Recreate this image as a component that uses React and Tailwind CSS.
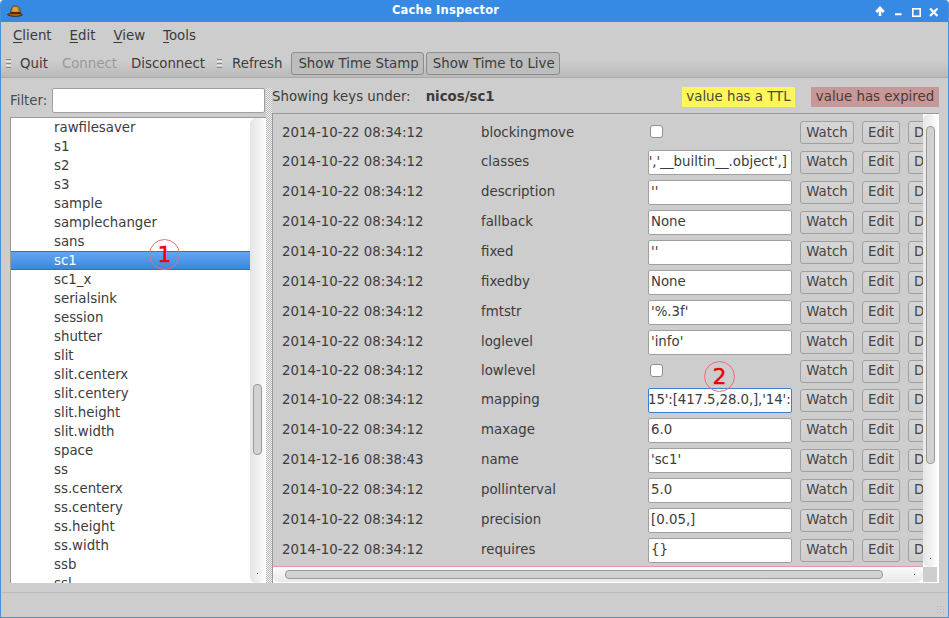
const names = ["rawfilesaver","s1","s2","s3","sample","samplechanger","sans","sc1","sc1_x","serialsink","session","shutter","slit","slit.centerx","slit.centery","slit.height","slit.width","space","ss","ss.centerx","ss.centery","ss.height","ss.width","ssb","ssl"];
const rows = [
  ["2014-10-22 08:34:12","blockingmove",null,29],
  ["2014-10-22 08:34:12","classes","','__builtin__.object',]",30,"end"],
  ["2014-10-22 08:34:12","description","''",30],
  ["2014-10-22 08:34:12","fallback","None",30],
  ["2014-10-22 08:34:12","fixed","''",30],
  ["2014-10-22 08:34:12","fixedby","None",30],
  ["2014-10-22 08:34:12","fmtstr","'%.3f'",30],
  ["2014-10-22 08:34:12","loglevel","'info'",30],
  ["2014-10-22 08:34:12","lowlevel",null,28],
  ["2014-10-22 08:34:12","mapping","15':[417.5,28.0,],'14':",30,"focus"],
  ["2014-10-22 08:34:12","maxage","6.0",30],
  ["2014-12-16 08:38:43","name","'sc1'",30],
  ["2014-10-22 08:34:12","pollinterval","5.0",30],
  ["2014-10-22 08:34:12","precision","[0.05,]",30],
  ["2014-10-22 08:34:12","requires","{}",30],
];
const Btn = ({children, w, cut}) => (
  <div className={`${w} h-[23px] shrink-0 flex items-center rounded-[3px] border border-[#a0a0a0] bg-[linear-gradient(#d6d6d6,#cdcdcd)] text-[#444] overflow-hidden ${cut ? "justify-start pl-[5px]" : "justify-center"}`}>{children}</div>
);
const Grip = () => (
  <div className="w-[5px] flex flex-col gap-[1px] shrink-0">
    <div className="h-[1px] bg-[#8a8a8a]" /><div className="h-[1px] bg-[#f0f0f0]" />
    <div className="h-[1px] bg-[#8a8a8a]" /><div className="h-[1px] bg-[#f0f0f0]" />
    <div className="h-[1px] bg-[#8a8a8a]" />
  </div>
);
const Mark = ({n, cls}) => (
  <div className={`absolute w-[31px] h-[31px] rounded-full border border-[#ee6a7a] flex items-center justify-center text-[#f00000] text-[22px] leading-none [-webkit-text-stroke:0.4px_#f00000] ${cls}`}>{n}</div>
);
const U = ({children}) => <span className="underline underline-offset-2">{children}</span>;
const Dot = ({cls}) => <div className={`absolute w-[1px] h-[1px] bg-[#555] ${cls}`} />;
export default function App() {
  return (
    <div className="relative w-[949px] h-[618px] overflow-hidden flex flex-col bg-[#cdcdcd] text-[13.33px] text-[#3c3c3c] border-x border-b border-[#4a90d9] rounded-t-[4px]" style={{fontFamily:'"DejaVu Sans", sans-serif'}}>
      <div className="h-[22px] shrink-0 relative flex items-center justify-center pr-[58px] bg-[#368ae4] text-white font-bold text-[11.5px] tracking-[0.2px]">
        <svg className="absolute left-[6px] top-[5px]" width="16" height="13" viewBox="0 0 16 13">
          <path d="M3.5 8.5 C4 2.5 5 1 8.5 1 C12 1 13 2.5 13.5 8.5 Z" fill="#c47a1e" stroke="#4a2c0a" strokeWidth="0.7" />
          <path d="M6 2.5 C7 1.8 9.5 1.8 10.5 2.5 L11 6.5 H5.5 Z" fill="#e2a33c" />
          <path d="M0.5 9.5 C3 8 14 8 15.5 9.5 C15 12 1.5 12 0.5 9.5 Z" fill="#a8640f" stroke="#2e1c06" strokeWidth="0.8" />
          <path d="M3.6 7 h9.8 v1.6 h-9.8 Z" fill="#4a2c0a" />
        </svg>
        Cache Inspector
        <svg className="absolute right-[7px] top-[5px]" width="66" height="13" viewBox="0 0 66 13" fill="none" stroke="#fff">
          <path d="M5 11 V4 M1.2 7 L5 3 L8.8 7" strokeWidth="2.6" />
          <path d="M20 9.2 H26.5" strokeWidth="2" />
          <rect x="37.8" y="3.8" width="7.4" height="7.4" strokeWidth="1.6" />
          <path d="M55 3.5 L62.5 11 M62.5 3.5 L55 11" strokeWidth="2.2" />
        </svg>
      </div>
      <div className="h-[28px] shrink-0 flex items-center pl-[12px] gap-[18px] text-[#3a3a3a]">
        <span><U>C</U>lient</span><span><U>E</U>dit</span><span><U>V</U>iew</span><span><U>T</U>ools</span>
      </div>
      <div className="h-[28px] shrink-0 flex items-center pl-[5px] gap-[12px] border-b border-[#a8a8a8] bg-[linear-gradient(#cdcdcd_40%,#b9b9b9)]">
        <Grip />
        <div className="flex items-center gap-[14px] -ml-[3px]">
          <span>Quit</span><span className="text-[#999]">Connect</span><span>Disconnect</span>
        </div>
        <Grip />
        <div className="flex items-center gap-[2px] -ml-[2px]">
          <span className="mr-[7px]">Refresh</span>
          <div className="h-[23px] pl-[6px] pr-[4px] flex items-center rounded-[3px] border border-[#8c8c8c] bg-[#bdbdbd]">Show Time Stamp</div>
          <div className="h-[23px] pl-[6px] pr-[4px] flex items-center rounded-[3px] border border-[#8c8c8c] bg-[#bdbdbd]">Show Time to Live</div>
        </div>
      </div>
      <div className="flex-1 min-h-0 flex pl-[9px] pr-[9px]">
        <div className="w-[256px] shrink-0 flex flex-col">
          <div className="h-[39px] shrink-0 flex items-center pt-[6px] pr-[1px]">
            <span className="text-[#4a4a4a]">Filter:</span>
            <div className="ml-auto w-[213px] h-[25px] bg-white rounded-[2px] border border-[#a0a0a0]" />
          </div>
          <div className="h-[466px] flex overflow-hidden bg-white border-l border-t border-[#999]">
            <div className="flex-1 min-w-0">
              {names.map((n) => (
                <div key={n} className={`h-[19px] pl-[43px] flex items-center ${n === "sc1" ? "bg-[linear-gradient(#62a6f2,#3b87dd)] border-y border-[#2f74c4] text-white" : "text-[#3c3c3c]"}`}>{n}</div>
              ))}
            </div>
            <div className="w-[15px] shrink-0 relative rounded-[6px] bg-[linear-gradient(90deg,#e4e4e4,#fbfbfb)]">
              <div className="absolute left-[3px] top-[266px] w-[9px] h-[71px] rounded-[4px] border border-[#9a9a9a] bg-[#d2d2d2]" />
              <Dot cls="left-[7px] bottom-[9px]" />
            </div>
            <div className="w-[1px] shrink-0 bg-white" />
          </div>
        </div>
        <div className="w-[6px] shrink-0 mt-[10px] bg-[repeating-conic-gradient(#f4f4f4_0_25%,#b8b8b8_0_50%)] bg-[length:2px_2px]" />
        <div className="flex-1 min-w-0 flex flex-col">
          <div className="h-[35px] shrink-0 flex items-center pt-[2px] text-[#3c3c3c]">
            <span>Showing keys under:</span>
            <span className="ml-[15px] font-bold text-[#3c3c3c]">nicos/sc1</span>
            <span className="ml-auto w-[113px] h-[20px] flex items-center justify-center bg-[#fff75a] text-[#4a4a3a]">value has a TTL</span>
            <span className="ml-[16px] w-[128px] h-[20px] flex items-center justify-center bg-[#c89797] text-[#4a3a3a]">value has expired</span>
          </div>
          <div className="h-[470px] flex flex-col overflow-hidden border-l border-t border-[#999] bg-white">
            <div className="flex-1 min-h-0 flex">
              <div className="flex-1 min-w-0 overflow-hidden bg-[#cdcdcd] pt-[4px] border-b border-[#e89a9a]">
                {rows.map(([ts, key, val, h, kind]) => (
                  <div key={key} style={{height: h}} className="flex items-center text-[#3c3c3c]">
                    <span className="w-[208px] pl-[9px] shrink-0">{ts}</span>
                    <span className="w-[167px] shrink-0">{key}</span>
                    <div className="w-[152px] shrink-0">
                      {val === null ? (
                        <div className="w-[13px] h-[13px] ml-[2px] -mt-[2px] bg-white border border-[#8f8f8f] rounded-[3px]" />
                      ) : (
                        <div className={`w-[144px] h-[25px] bg-white rounded-[2px] border flex items-center overflow-hidden whitespace-nowrap ${kind === "focus" ? "border-[#3b7fcf]" : "border-[#a0a0a0]"} ${kind === "end" ? "justify-end pr-[4px]" : "px-[2px]"} ${kind === "focus" ? "pl-0" : ""}`}>
                          <span className={kind === "focus" ? "-ml-[1px] tracking-[-0.1px]" : ""}>{val}</span>
                        </div>
                      )}
                    </div>
                    <Btn w="w-[54px]">Watch</Btn>
                    <div className="w-[8px] shrink-0" />
                    <Btn w="w-[38px]">Edit</Btn>
                    <div className="w-[8px] shrink-0" />
                    <Btn w="w-[50px]" cut>D</Btn>
                  </div>
                ))}
              </div>
              <div className="w-[14px] shrink-0 relative bg-[linear-gradient(90deg,#e6e6e6,#fbfbfb)] rounded-[6px]">
                <div className="absolute left-[3px] top-[12px] w-[9px] h-[338px] rounded-[4px] border border-[#9a9a9a] bg-[#d2d2d2]" />
                <Dot cls="left-[7px] bottom-[8px]" />
              </div>
              <div className="w-[2px] shrink-0 bg-white" />
            </div>
            <div className="h-[15px] shrink-0 flex">
              <div className="flex-1 relative rounded-[6px] bg-[linear-gradient(#fbfbfb,#e8e8e8)] pl-[12px] pt-[3px]">
                <div className="w-[598px] h-[9px] rounded-[4px] border border-[#9a9a9a] bg-[#d2d2d2]" />
                <Dot cls="right-[8px] top-[7px]" />
              </div>
              <div className="w-[14px] shrink-0 bg-[#cdcdcd]" />
              <div className="w-[2px] shrink-0 bg-white" />
            </div>
            <div className="h-[1px] shrink-0 bg-white" />
          </div>
        </div>
      </div>
      <div className="h-[25px] shrink-0 mt-[9px] border-t border-[#bcbcbc] relative">
        <div className="absolute right-[2px] bottom-[2px] w-[10px] h-[10px] bg-[radial-gradient(#b4b4b4_30%,transparent_35%)] bg-[length:3px_3px]" />
      </div>
      <Mark n="1" cls="left-[148px] top-[239px]" />
      <Mark n="2" cls="left-[703px] top-[361px]" />
    </div>
  );
}
